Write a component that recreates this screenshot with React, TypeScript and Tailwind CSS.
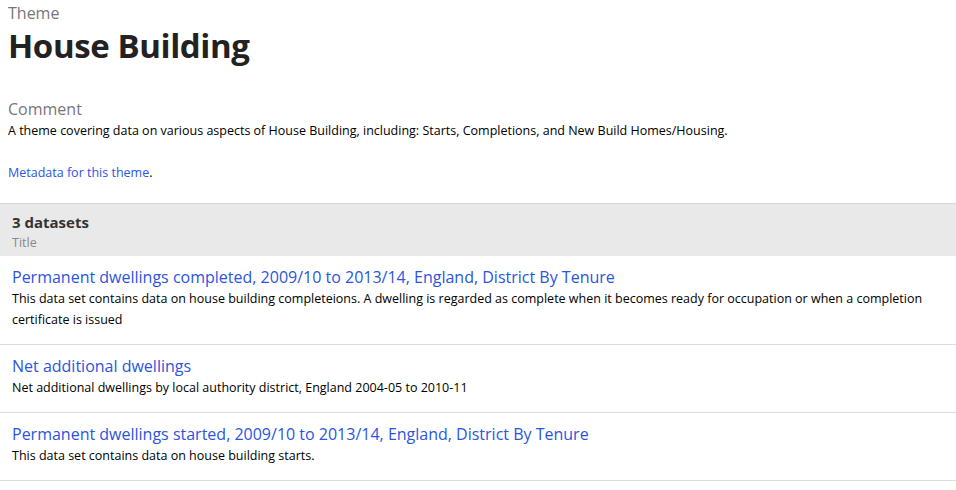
const datasets = [
  {
    title: "Permanent dwellings completed, 2009/10 to 2013/14, England, District By Tenure",
    desc: "This data set contains data on house building completeions. A dwelling is regarded as complete when it becomes ready for occupation or when a completion certificate is issued",
  },
  {
    title: "Net additional dwellings",
    desc: "Net additional dwellings by local authority district, England 2004-05 to 2010-11",
  },
  {
    title: "Permanent dwellings started, 2009/10 to 2013/14, England, District By Tenure",
    desc: "This data set contains data on house building starts.",
  },
];

export default function App() {
  return (
    <div className="w-[956px] h-[490px] overflow-hidden bg-white font-['Open_Sans',sans-serif] text-black">
      <div className="px-2">
        <p className="text-[16px] leading-[26px] text-[#777]">Theme</p>
        <h1 className="text-[33px] leading-[40px] font-bold text-[#222] tracking-[-0.4px]">House Building</h1>
        <p className="mt-[32px] text-[16px] leading-[22px] text-[#777]">Comment</p>
        <p className="text-[12.5px] leading-[21px]">
          A theme covering data on various aspects of House Building, including: Starts, Completions, and New Build Homes/Housing.
        </p>
        <p className="mt-[22px] text-[12.5px] leading-[20px]">
          <a href="#" className="text-[#2b55e0]">Metadata for this theme</a>.
        </p>
      </div>

      <div className="mt-[20px] border-t border-[#d6d6d6] bg-[#e9e9e9] px-3 pt-[7px] pb-[3px]">
        <p className="text-[15px] leading-[22px] font-bold text-[#333]">3 datasets</p>
        <p className="text-[12.5px] leading-[20px] text-[#888]">Title</p>
      </div>

      <ul>
        {datasets.map((d) => (
          <li key={d.title} className="border-b border-[#dcdcdc] px-3 pt-[10px] pb-[14px]">
            <a href="#" className="block text-[16px] leading-[22px] text-[#2b55e0]">{d.title}</a>
            <p className="text-[12.5px] leading-[21px]">{d.desc}</p>
          </li>
        ))}
      </ul>
    </div>
  );
}
